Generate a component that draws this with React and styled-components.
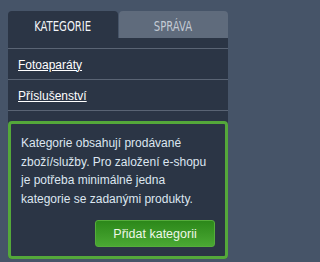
import React, { useState } from "react";
import styled, { createGlobalStyle } from "styled-components";

const GlobalStyle = createGlobalStyle`
  html, body {
    margin: 0;
    padding: 0;
    background: #465468;
  }
  body {
    font-family: "Liberation Sans", Arial, sans-serif;
  }
`;

const Page = styled.div`
  padding: 11px 10px 9px 8px;
  width: 220px;
`;

const Panel = styled.div`
  display: flex;
  flex-direction: column;
  background: #2b3545;
  border-radius: 4px;
`;

const Tabs = styled.div`
  display: flex;
  gap: 1px;
  background: #465468;
`;

const Tab = styled.button`
  flex: 1;
  height: 27px;
  border: none;
  border-radius: 4px 4px 0 0;
  padding: 2px 0 0;
  background: ${(p) => (p.$active ? "#2b3545" : "#5f6b7c")};
  color: ${(p) => (p.$active ? "#f2f4f7" : "#c3cad4")};
  font-family: "DejaVu Sans Condensed", "DejaVu Sans", sans-serif;
  font-stretch: condensed;
  font-size: 14px;
  text-transform: uppercase;
  cursor: pointer;
`;

const TabLabel = styled.span`
  display: inline-block;
  transform: scaleX(0.8);
`;

const List = styled.ul`
  list-style: none;
  margin: 10px 0 0;
  padding: 0;
  border-top: 1px solid #5a6474;
`;

const Row = styled.li`
  height: 29px;
  display: flex;
  align-items: center;
  padding: 1px 10px 0;
  border-bottom: 1px solid #5a6474;
`;

const RowLink = styled.a`
  color: #ffffff;
  font-size: 12px;
  text-decoration: underline;
  cursor: pointer;
`;

const InfoBox = styled.div`
  margin-top: 10px;
  border: 3px solid #54a83a;
  border-radius: 4px;
  padding: 10px 10px 9px;
  display: flex;
  flex-direction: column;
`;

const InfoText = styled.p`
  margin: 0;
  color: #dde6f0;
  font-size: 12px;
  line-height: 18.5px;
`;

const AddButton = styled.button`
  align-self: flex-end;
  margin-top: 12px;
  width: 120px;
  height: 27px;
  border: 1px solid #55ad3b;
  border-radius: 3px;
  background: linear-gradient(#2c881a, #4aa833);
  color: #eef7e8;
  font-family: "Liberation Sans", Arial, sans-serif;
  font-size: 12.5px;
  cursor: pointer;
`;

const categories = ["Fotoaparáty", "Příslušenství"];

export default function App() {
  const [tab, setTab] = useState("kategorie");

  return (
    <Page>
      <GlobalStyle />
      <Panel>
        <Tabs>
          <Tab $active={tab === "kategorie"} onClick={() => setTab("kategorie")}>
            <TabLabel>Kategorie</TabLabel>
          </Tab>
          <Tab $active={tab === "sprava"} onClick={() => setTab("sprava")}>
            <TabLabel>Správa</TabLabel>
          </Tab>
        </Tabs>
        <List>
          {categories.map((c) => (
            <Row key={c}>
              <RowLink>{c}</RowLink>
            </Row>
          ))}
        </List>
        <InfoBox>
          <InfoText>
            Kategorie obsahují prodávané zboží/služby. Pro založení e-shopu je
            potřeba minimálně jedna kategorie se zadanými produkty.
          </InfoText>
          <AddButton>Přidat kategorii</AddButton>
        </InfoBox>
      </Panel>
    </Page>
  );
}
